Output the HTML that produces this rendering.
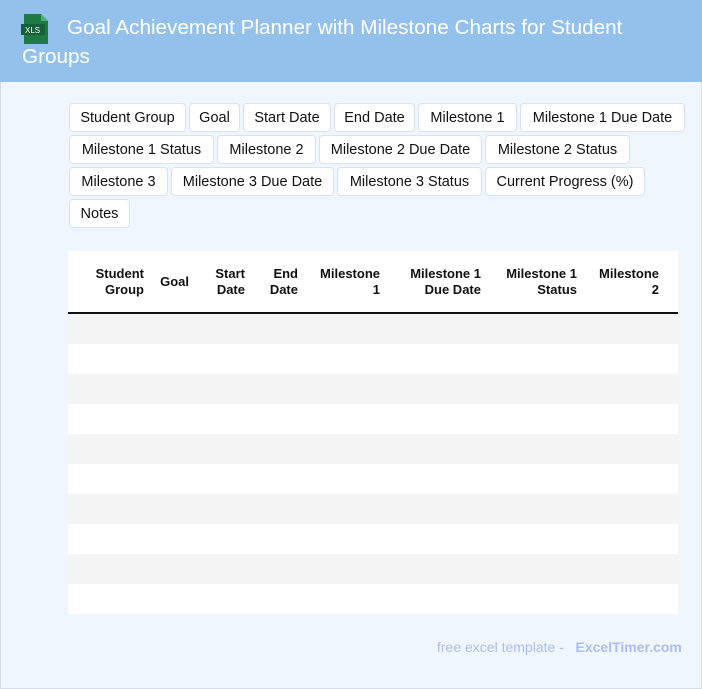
<!DOCTYPE html>
<html><head><meta charset="utf-8"><style>
*{margin:0;padding:0;box-sizing:border-box}
body{width:702px;height:689px;background:#f0f6fe;font-family:"Liberation Sans",sans-serif;position:relative;overflow:hidden;box-shadow:inset 0 0 0 1px #d5dde8}
.hdr{position:absolute;left:0;top:0;width:702px;height:82px;background:#93c1ec}
.title{position:absolute;left:22px;top:13px;width:660px;color:#fff;font-size:20.7px;line-height:29px;text-indent:45px}
.t{position:absolute;height:29px;background:#fff;border:1px solid #d9e3f0;border-radius:4px;font-size:14.5px;line-height:28px;text-align:center;color:#111;white-space:nowrap}
.tbl{position:absolute;left:68px;top:251px;width:610px;height:363px;background:#fff}
.h{position:absolute;font-weight:bold;font-size:13px;line-height:16px;text-align:right;color:#111}
.r{position:absolute;left:0;width:610px;height:30px}
.foot{position:absolute;left:437px;top:639px;font-size:14px;color:#a9bdf0}
</style></head><body>
<div class="hdr"></div>
<svg style="position:absolute;left:21px;top:14px" width="30" height="30" viewBox="0 0 30 30">
<path d="M3 0h17l7 7v23H3z" fill="#1e7a45"/><path d="M20 0v7h7z" fill="#4fae78"/>
<rect x="0" y="10" width="24" height="11" fill="#16603a"/>
<text x="4" y="19" font-size="8" fill="#fff" font-family="Liberation Sans">XLS</text></svg>
<div class="title">Goal Achievement Planner with Milestone Charts for Student Groups</div>

<div class="t" style="left:69px;top:103px;width:117px">Student Group</div>
<div class="t" style="left:189px;top:103px;width:51px">Goal</div>
<div class="t" style="left:243px;top:103px;width:88px">Start Date</div>
<div class="t" style="left:334px;top:103px;width:81px">End Date</div>
<div class="t" style="left:418px;top:103px;width:99px">Milestone 1</div>
<div class="t" style="left:520px;top:103px;width:165px">Milestone 1 Due Date</div>
<div class="t" style="left:69px;top:135px;width:145px">Milestone 1 Status</div>
<div class="t" style="left:217px;top:135px;width:99px">Milestone 2</div>
<div class="t" style="left:319px;top:135px;width:163px">Milestone 2 Due Date</div>
<div class="t" style="left:485px;top:135px;width:145px">Milestone 2 Status</div>
<div class="t" style="left:69px;top:167px;width:99px">Milestone 3</div>
<div class="t" style="left:171px;top:167px;width:163px">Milestone 3 Due Date</div>
<div class="t" style="left:337px;top:167px;width:145px">Milestone 3 Status</div>
<div class="t" style="left:485px;top:167px;width:160px">Current Progress (%)</div>
<div class="t" style="left:69px;top:199px;width:61px">Notes</div>

<div class="tbl">
<div class="h" style="right:534px;top:15px">Student<br>Group</div>
<div class="h" style="right:489px;top:23px">Goal</div>
<div class="h" style="right:433px;top:15px">Start<br>Date</div>
<div class="h" style="right:380px;top:15px">End<br>Date</div>
<div class="h" style="right:298px;top:15px">Milestone<br>1</div>
<div class="h" style="right:197px;top:15px">Milestone 1<br>Due Date</div>
<div class="h" style="right:101px;top:15px">Milestone 1<br>Status</div>
<div class="h" style="right:19px;top:15px">Milestone<br>2</div>
<div style="position:absolute;left:0;top:61px;width:610px;height:2px;background:#111"></div>
<div class="r" style="top:63px;background:#f4f4f4"></div>
<div class="r" style="top:123px;background:#f4f4f4"></div>
<div class="r" style="top:183px;background:#f4f4f4"></div>
<div class="r" style="top:243px;background:#f4f4f4"></div>
<div class="r" style="top:303px;background:#f4f4f4"></div>
</div>
<div class="foot">free excel template - &nbsp; <b>ExcelTimer.com</b></div>
</body></html>
